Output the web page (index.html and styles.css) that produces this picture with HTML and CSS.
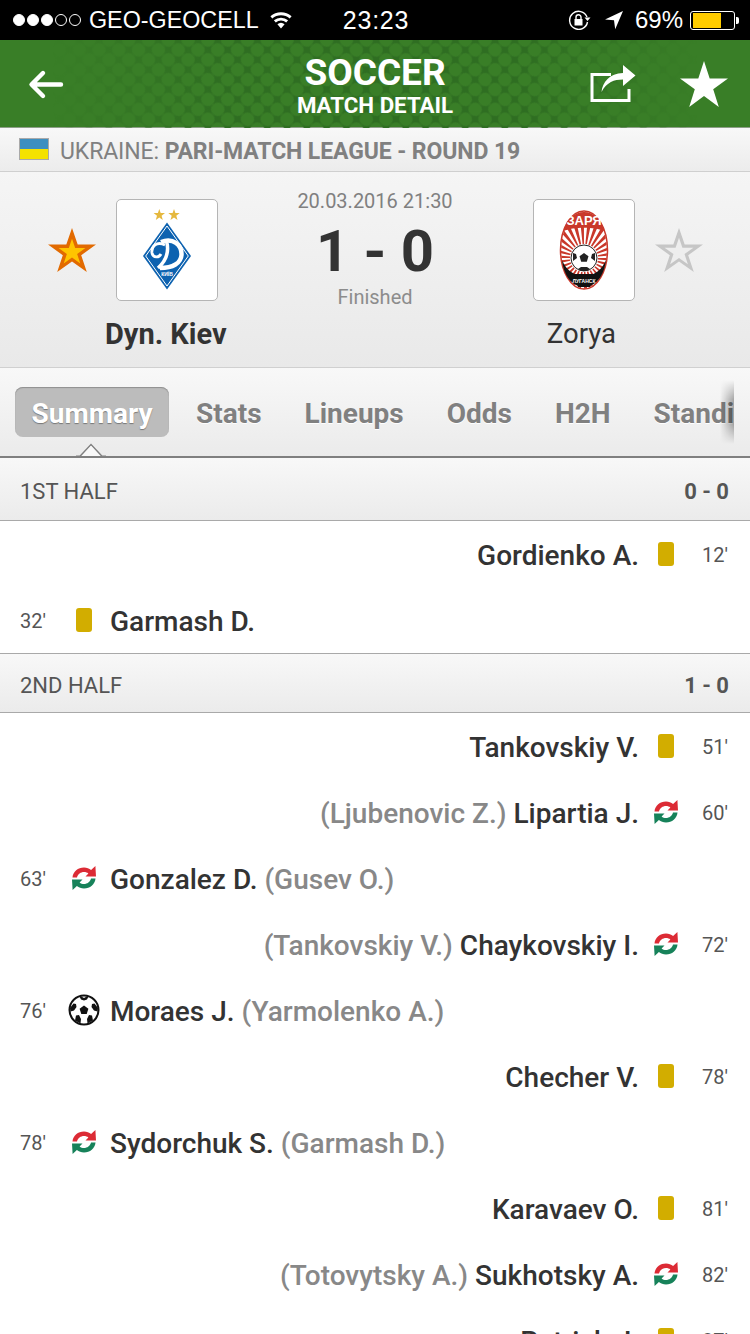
FILE: index.html
```html
<!DOCTYPE html>
<html lang="en">
<head>
<meta charset="utf-8">
<title>Soccer match detail</title>
<link rel="stylesheet" href="styles.css">
</head>
<body>
<svg class="defs" width="0" height="0" aria-hidden="true">
  <defs>
    <symbol id="sub" viewBox="0 0 24 24">
      <path id="sub-arc" fill="#dc2b35" d="M.5 11.500C1 5.500 6 1.500 12 1.500c2.800 0 5.200.9 7.100 2.500L23.400 0l.6 10.500H13.500l2.900-3C15.200 6.500 13.700 6 12 6 8.800 6 5.800 8.200 5 11.500z"/>
      <path fill="#17825a" transform="rotate(180 12 12)" d="M.5 11.500C1 5.500 6 1.500 12 1.500c2.800 0 5.200.9 7.100 2.500L23.400 0l.6 10.500H13.500l2.900-3C15.200 6.500 13.700 6 12 6 8.800 6 5.800 8.200 5 11.500z"/>
    </symbol>
    <pattern id="halftone" width="14" height="14" patternUnits="userSpaceOnUse" patternTransform="rotate(45)">
      <path fill="#2f6e22" fill-rule="evenodd" d="M0 0h14v14H0zM7 .2a6.800 6.800 0 1 0 0 13.600A6.800 6.800 0 0 0 7 .2z"/>
    </pattern>
    <linearGradient id="halftone-fade">
      <stop offset=".07" stop-color="#000"/>
      <stop offset=".3" stop-color="#fff"/>
      <stop offset=".7" stop-color="#fff"/>
      <stop offset=".93" stop-color="#000"/>
    </linearGradient>
    <mask id="halftone-mask"><rect width="750" height="88" fill="url(#halftone-fade)"/></mask>
    <clipPath id="zorya-clip"><ellipse cx="25" cy="40" rx="23" ry="38.500"/></clipPath>
  </defs>
</svg>

<header class="status">
  <div class="status-left">
    <span class="signal"><i class="on"></i><i class="on"></i><i class="on"></i><i></i><i></i></span>
    <span class="carrier">GEO-GEOCELL</span>
    <svg class="wifi" viewBox="0 0 26 18" width="26" height="18"><path fill="#fff" d="M13 17.500l-3.600-4.200a5.400 5.400 0 0 1 7.200 0zM7.800 11.500 5.900 9.300a10.800 10.800 0 0 1 14.200 0l-1.900 2.200a8 8 0 0 0-10.400 0zM4.300 7.500 2.400 5.300a16.200 16.200 0 0 1 21.200 0l-1.900 2.200a13.400 13.400 0 0 0-17.400 0z"/></svg>
  </div>
  <div class="status-time">23:23</div>
  <div class="status-right">
    <svg class="lock" viewBox="0 0 24 20" width="24" height="20"><path fill="none" stroke="#fff" stroke-width="1.400" d="M19.500 12A9 9 0 1 1 19 7"/><path fill="#fff" d="M16.500 7.500h6l-3 3.500zM6.500 9h8v6.500h-8z"/><path fill="none" stroke="#fff" stroke-width="1.400" d="M8 9V7.200a2.500 2.500 0 0 1 5 0V9"/></svg>
    <svg class="arrow-loc" viewBox="0 0 20 20" width="20" height="20"><path fill="#fff" d="M19 1 1 9.500l9 .7 1.200 9z"/></svg>
    <span class="pct">69%</span>
    <span class="battery"><span class="battery-level"></span></span>
  </div>
</header>

<section class="topbar">
  <svg class="halftone" width="750" height="88" aria-hidden="true"><rect width="750" height="88" fill="url(#halftone)" mask="url(#halftone-mask)"/></svg>
  <svg class="back" viewBox="0 0 36 32" width="36" height="32"><path fill="none" stroke="#fff" stroke-width="4.400" stroke-linecap="round" stroke-linejoin="round" d="M33 15.500H4M15 4 3.500 15.500 15 27"/></svg>
  <div class="title">
    <div class="title-main">SOCCER</div>
    <div class="title-sub">MATCH DETAIL</div>
  </div>
  <div class="top-actions">
    <svg viewBox="0 0 46 40" width="46" height="40"><path fill="none" stroke="#fff" stroke-width="3" d="M21 10.500H2v26h37V25"/><path fill="#fff" d="M33 1l12.500 10.500L33 22v-6.500C24 15.500 17 18 11.500 28c1-10 8-18.500 21.500-19z"/></svg>
    <svg viewBox="0 0 48 46" width="48" height="46"><path fill="#fff" d="M24 0l5.700 17.400H48L33.200 28.200 38.800 46 24 35 9.200 46l5.600-17.800L0 17.400h18.300z"/></svg>
  </div>
</section>

<section class="league">
  <svg class="flag" viewBox="0 0 30 22" width="30" height="22"><rect width="30" height="11" fill="#3d8fc0"/><rect y="11" width="30" height="11" fill="#f4e200"/><rect x=".5" y=".5" width="29" height="21" fill="none" stroke="#a9a9a9"/></svg>
  <span class="league-text">UKRAINE: <b>PARI-MATCH LEAGUE - ROUND 19</b></span>
</section>

<section class="match">
  <div class="team team-home">
    <div class="team-row">
      <svg class="fav" viewBox="0 0 48 46" width="48" height="46"><path fill="#e26a00" d="M24 1l5.700 16.400H48L33.200 28.200 38.800 45 24 34.500 9.200 45l5.600-16.800L0 17.400h18.300z"/><path fill="#ffc400" transform="translate(24 25.500) scale(.56) translate(-24 -25.500)" d="M24 1l5.700 16.400H48L33.200 28.200 38.800 45 24 34.500 9.200 45l5.600-16.800L0 17.400h18.300z"/></svg>
      <div class="crest">
        <svg viewBox="0 0 60 84" width="60" height="84">
          <path fill="#e5b83e" transform="translate(22.300 7)" d="M0-6 1.400-1.900H5.700L2.300.7 3.500 4.900 0 2.400-3.500 4.900-2.300.7-5.700-1.900H-1.400z"/>
          <path fill="#e5b83e" transform="translate(37 7)" d="M0-6 1.400-1.900H5.700L2.300.7 3.500 4.900 0 2.400-3.500 4.900-2.300.7-5.700-1.900H-1.400z"/>
          <path fill="#0d62b0" d="M30 14.500 54 48 30 81.500 6 48z"/>
          <path fill="none" stroke="#fff" stroke-width="1" d="M30 18 51.300 48 30 78 8.700 48z"/>
          <path fill="none" stroke="#fff" stroke-width="4.500" d="M24 34C36 29 45 37 44.500 47 44 55 36 60 23 60"/>
          <path fill="none" stroke="#fff" stroke-width="3.500" d="M29.500 33C32 42 30 52 21 60"/>
          <path fill="none" stroke="#fff" stroke-width="2.800" d="M28 37C20 33 14 38 15 45 16 50 22 50 24 46"/>
          <text x="30" y="68" class="crest-text-small" text-anchor="middle">КИЇВ</text>
        </svg>
      </div>
    </div>
    <div class="team-name strong">Dyn. Kiev</div>
  </div>
  <div class="score-box">
    <div class="match-date">20.03.2016 21:30</div>
    <div class="score">1 - 0</div>
    <div class="match-state">Finished</div>
  </div>
  <div class="team team-away">
    <div class="team-row">
      <div class="crest">
        <svg viewBox="0 0 50 80" width="50" height="80">
          <ellipse cx="25" cy="40" rx="23.500" ry="39" fill="#fff" stroke="#c9382a" stroke-width="1.500"/>
          <circle cx="25" cy="48" r="25" fill="none" stroke="#c9382a" stroke-width="22" stroke-dasharray="2.600 2.600" clip-path="url(#zorya-clip)"/>
          <path fill="#c9382a" d="M25 2C15 2 7 10 4.500 21c10-4.500 31-4.500 41 0C43 10 35 2 25 2z"/>
          <path fill="#111" d="M3 50C5 68 15 77 25 77s20-9 22-27c-4 10-12 16-22 16S7 60 3 50z"/>
          <path fill="#111" d="M15 64h20l-4 13H19z"/>
          <circle cx="25" cy="48" r="13" fill="#fff" stroke="#222" stroke-width="1"/>
          <path fill="#222" d="M25 43l4.500 3.300-1.700 5.400h-5.600l-1.700-5.400zM14 43l3 1 1 4-4 3zM36 43l-3 1-1 4 4 3zM19 59l3-2h6l3 2-3 2h-6z"/>
          <text x="25" y="15" class="crest-text" text-anchor="middle">ЗАРЯ</text>
          <text x="25" y="73" class="crest-text-small" text-anchor="middle">ЛУГАНСК</text>
        </svg>
      </div>
      <svg class="fav" viewBox="0 0 48 46" width="48" height="46"><path fill="#c6c6c6" d="M24 1l5.700 16.400H48L33.200 28.200 38.800 45 24 34.500 9.200 45l5.600-16.800L0 17.400h18.300z"/><path fill="#eee" transform="translate(24 25.500) scale(.6) translate(-24 -25.500)" d="M24 1l5.700 16.400H48L33.200 28.200 38.800 45 24 34.500 9.200 45l5.600-16.800L0 17.400h18.300z"/></svg>
    </div>
    <div class="team-name">Zorya</div>
  </div>
</section>

<nav class="tabs">
  <span class="tab active">Summary</span>
  <span class="tab">Stats</span>
  <span class="tab">Lineups</span>
  <span class="tab">Odds</span>
  <span class="tab">H2H</span>
  <span class="tab">Standings</span>
  <span class="tab-fade"></span>
  <svg class="tab-pointer" viewBox="0 0 30 14" width="30" height="14"><path fill="#f8f8f8" stroke="#808080" stroke-width="1.500" d="M0 13.250h4L15 1.500l11 11.750h4"/><path fill="#f8f8f8" d="M5 14 15 3l10 11z"/></svg>
</nav>

<div class="section-head first"><span>1ST HALF</span><b>0 - 0</b></div>
<div class="row away"><span class="name">Gordienko A.</span><span class="icon"><i class="card"></i></span><span class="min">12'</span></div>
<div class="row home"><span class="min">32'</span><span class="icon"><i class="card"></i></span><span class="name">Garmash D.</span></div>

<div class="section-head"><span>2ND HALF</span><b>1 - 0</b></div>
<div class="row away"><span class="name">Tankovskiy V.</span><span class="icon"><i class="card"></i></span><span class="min">51'</span></div>
<div class="row away"><span class="name"><em>(Ljubenovic Z.)</em> Lipartia J.</span><span class="icon"><svg class="sub" width="24" height="24"><use href="#sub"/></svg></span><span class="min">60'</span></div>
<div class="row home"><span class="min">63'</span><span class="icon"><svg class="sub" width="24" height="24"><use href="#sub"/></svg></span><span class="name">Gonzalez D. <em>(Gusev O.)</em></span></div>
<div class="row away"><span class="name"><em>(Tankovskiy V.)</em> Chaykovskiy I.</span><span class="icon"><svg class="sub" width="24" height="24"><use href="#sub"/></svg></span><span class="min">72'</span></div>
<div class="row home"><span class="min">76'</span><span class="icon">
  <svg width="32" height="32" viewBox="0 0 32 32"><circle cx="16" cy="16" r="14.500" fill="#fff" stroke="#111" stroke-width="2"/><path fill="#111" d="M16 11.500l4.400 3.200-1.700 5.200h-5.400l-1.700-5.200zM12.500 2l3.500 2 3.500-2 1 .5-1.500 3L16 6.500l-3-1-1.500-3zM2 14l3.500-4.500 2.500.5.500 3-2.500 3.500-3.500 1zM30 14l-3.500-4.500-2.500.5-.5 3 2.500 3.500 3.500 1zM7 26.500l1-5 3-.5 2 4-.5 4.500zM25 26.500l-1-5-3-.5-2 4 .5 4.500z"/></svg>
</span><span class="name">Moraes J. <em>(Yarmolenko A.)</em></span></div>
<div class="row away"><span class="name">Checher V.</span><span class="icon"><i class="card"></i></span><span class="min">78'</span></div>
<div class="row home"><span class="min">78'</span><span class="icon"><svg class="sub" width="24" height="24"><use href="#sub"/></svg></span><span class="name">Sydorchuk S. <em>(Garmash D.)</em></span></div>
<div class="row away"><span class="name">Karavaev O.</span><span class="icon"><i class="card"></i></span><span class="min">81'</span></div>
<div class="row away"><span class="name"><em>(Totovytsky A.)</em> Sukhotsky A.</span><span class="icon"><svg class="sub" width="24" height="24"><use href="#sub"/></svg></span><span class="min">82'</span></div>
<div class="row away"><span class="name">Patrick J.</span><span class="icon"><i class="card"></i></span><span class="min">87'</span></div>
</body>
</html>
```

FILE: styles.css
```css
* { box-sizing: border-box; }
html, body { margin: 0; padding: 0; }
body {
  width: 750px;
  height: 1334px;
  overflow: hidden;
  background: #fff;
  font-family: Roboto, "Noto Sans", sans-serif;
  color: #333;
}
.defs { position: absolute; }

.status {
  height: 40px;
  background: #000;
  color: #fff;
  font-family: "Liberation Sans", sans-serif;
  font-size: 24px;
  display: grid;
  grid-template-columns: 1fr auto 1fr;
  align-items: center;
  padding: 0 11px 0 13px;
}
.status-left, .status-right { display: flex; align-items: center; }
.status-left { gap: 8px; }
.status-right { justify-content: flex-end; }
.carrier { font-size: 23.3px; }
.status-time { font-size: 25px; letter-spacing: .8px; }
.signal { display: flex; gap: 2px; }
.signal i { width: 12px; height: 12px; border: 1px solid #fff; border-radius: 50%; }
.signal i.on { background: #fff; }
.wifi { margin-left: 1px; }
.arrow-loc { margin-left: 12px; }
.pct { margin-left: 11px; }
.battery {
  position: relative;
  width: 45px;
  height: 19px;
  border: 1px solid #fff;
  border-radius: 3px;
  padding: 1px 2px;
  margin-left: 7px;
  margin-right: 4px;
}
.battery::after {
  content: "";
  position: absolute;
  right: -5px;
  top: 5px;
  width: 3px;
  height: 7px;
  background: #fff;
  border-radius: 0 2px 2px 0;
}
.battery-level { display: block; width: 28px; height: 15px; background: #ffcc00; }

.topbar {
  height: 88px;
  position: relative;
  display: flex;
  align-items: center;
  justify-content: space-between;
  padding: 0 22px 0 28px;
  color: #fff;
  background-color: #397e27;
  box-shadow: inset 0 -1px 0 #8d9f88;
}
.halftone { position: absolute; left: 0; top: 0; }
.back { position: relative; margin-top: 1px; }
.title { position: absolute; left: 0; right: 0; top: 13px; text-align: center; }
.title-main { font-size: 37px; line-height: 39px; font-weight: 700; }
.title-sub { font-size: 22.3px; line-height: 27px; font-weight: 700; }
.top-actions { display: flex; align-items: center; gap: 44px; position: relative; }

.league {
  height: 44px;
  display: flex;
  align-items: center;
  gap: 11px;
  padding: 0 0 0 19px;
  background: linear-gradient(#f8f8f8, #ececec);
  border-bottom: 1px solid #cfcfcf;
  color: #808080;
  font-size: 23px;
  letter-spacing: -.1px;
}
.league-text { padding-top: 4px; }
.league-text b { font-weight: 700; }
.flag { margin-top: -1px; }

.match {
  height: 196px;
  display: grid;
  grid-template-columns: 1fr auto 1fr;
  background: linear-gradient(#f5f5f5, #e9e9e9);
  border-bottom: 1px solid #d0d0d0;
}
.team { display: flex; flex-direction: column; align-items: center; }
.team-row { display: flex; align-items: center; height: 102px; margin-top: 27px; }
.team-home { padding-left: 48px; align-items: flex-start; }
.team-away { padding-right: 47px; align-items: flex-end; }
.team-home .crest { margin-left: 20px; }
.team-away .crest { margin-right: 20px; }
.crest {
  width: 102px;
  height: 102px;
  background: #fff;
  border: 1px solid #b5b5b5;
  border-radius: 5px;
  display: flex;
  align-items: center;
  justify-content: center;
}
.crest-text { font: 700 13px "Liberation Sans", sans-serif; fill: #fff; }
.crest-text-small { font: 700 5px "Liberation Sans", sans-serif; fill: #fff; }
.team-name { font-size: 27.5px; line-height: 34px; margin-top: 16px; }
.team-home .team-name { align-self: flex-start; margin-left: 57px; }
.team-away .team-name { align-self: flex-end; margin-right: 87px; }
.team-name.strong { font-weight: 700; font-size: 29px; }
.score-box { text-align: center; width: 170px; }
.match-date { margin-top: 16px; font-size: 20px; line-height: 26px; color: #808080; }
.score { font-size: 58px; line-height: 62px; font-weight: 700; margin-top: 6px; color: #333; }
.match-state { font-size: 20px; line-height: 26px; color: #8c8c8c; margin-top: 2px; }

.tabs {
  position: relative;
  height: 90px;
  display: flex;
  align-items: flex-start;
  overflow: hidden;
  padding: 19px 0 0 15px;
  background: linear-gradient(#f8f8f8, #ebebeb);
  border-bottom: 2px solid #7f7f7f;
  font-size: 28px;
  font-weight: 700;
  color: #808080;
  white-space: nowrap;
}
.tab {
  flex: none;
  height: 50px;
  line-height: 50px;
  padding: 2px 21.5px 0;
  text-shadow: 0 1px 0 #fff;
}
.tab.active {
  width: 154px;
  padding: 2px 0 0;
  margin-right: 5.500px;
  text-align: center;
  background: #bcbcbc;
  border-radius: 8px;
  color: #fff;
  text-shadow: 0 1px 1px #777;
  box-shadow: inset 0 1px 1px #8e8e8e;
}
.tab-fade {
  position: absolute;
  left: 734px;
  top: 0;
  bottom: 0;
  width: 16px;
  background: linear-gradient(#f8f8f8, #ebebeb);
}
.tab-fade::before {
  content: "";
  position: absolute;
  right: 100%;
  top: 12px;
  width: 14px;
  height: 64px;
  background: linear-gradient(90deg, transparent, rgba(0,0,0,.32));
  -webkit-mask-image: linear-gradient(transparent, #000 30%, #000 70%, transparent);
  mask-image: linear-gradient(transparent, #000 30%, #000 70%, transparent);
}
.tab-pointer { position: absolute; left: 76px; bottom: -1px; }

.section-head {
  height: 60px;
  display: flex;
  align-items: center;
  justify-content: space-between;
  padding: 5px 21px 0 20px;
  background: linear-gradient(#f8f8f8, #ebebeb);
  border-top: 1px solid #a9a9a9;
  border-bottom: 1px solid #a9a9a9;
  font-size: 22px;
  color: #555;
}
.section-head.first { height: 63px; border-top: 0; }
.section-head b { font-weight: 700; font-size: 22px; }

.row {
  height: 66px;
  display: flex;
  align-items: center;
  font-size: 28px;
  font-weight: 500;
  color: #333;
  white-space: nowrap;
}
.row.away { justify-content: flex-end; }
.row.home { padding-left: 20px; }
.name { padding-top: 3px; }
.name em { font-style: normal; color: #888; }
.min { font-size: 20px; font-weight: 400; color: #555; padding-top: 2px; }
.home .min { width: 48px; }
.away .min { width: 68px; padding-right: 22px; text-align: right; }
.icon { width: 32px; height: 32px; display: flex; align-items: center; justify-content: center; }
.home .name { margin-left: 10px; }
.away .name { margin-right: 11px; }
.card { display: block; width: 16px; height: 24px; background: #d2ad00; border-radius: 3px; }
```
